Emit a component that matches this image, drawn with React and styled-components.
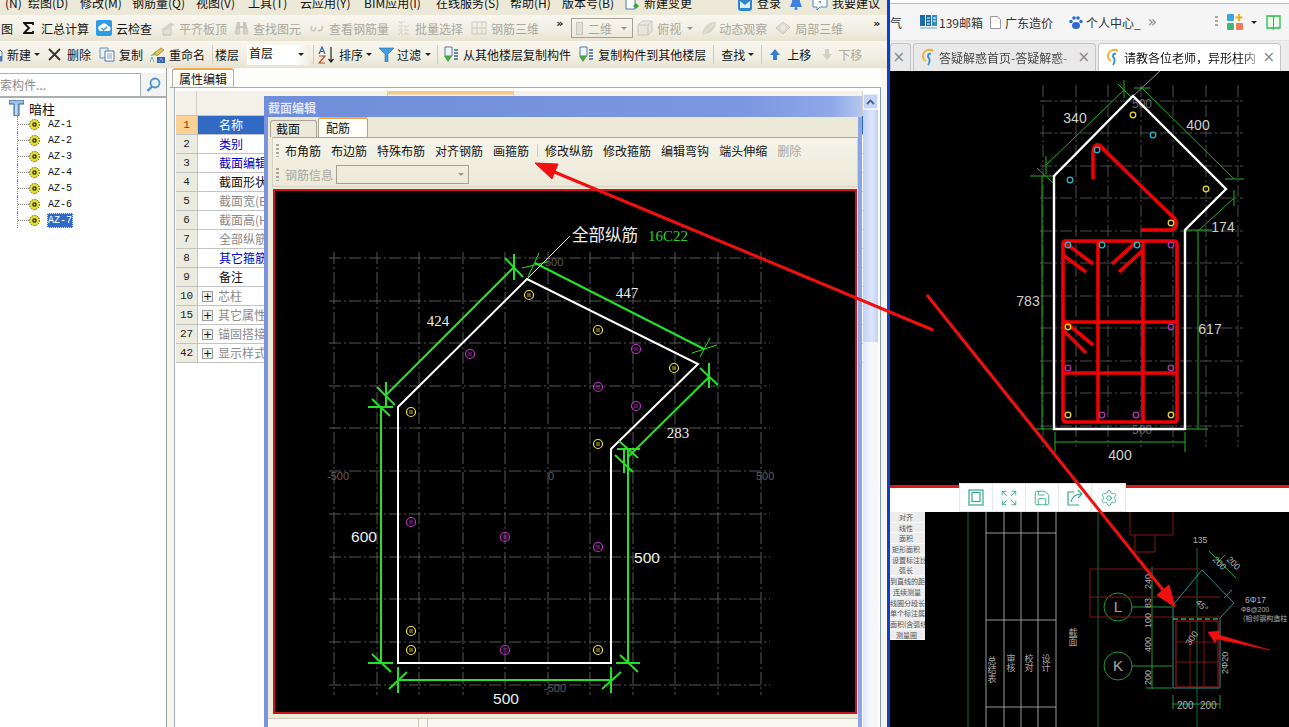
import React from "react";
import styled, { createGlobalStyle } from "styled-components";
import { Expand, Save, Settings } from "lucide-react";

const GlobalStyle = createGlobalStyle`
  html, body {
    margin: 0;
    padding: 0;
    background: #fff;
    overflow: hidden;
  }
  body {
    font-family: "Noto Sans CJK SC", "Liberation Sans", sans-serif;
    font-size: 12px;
    color: #111;
  }
`;

const Page = styled.div`
  position: relative;
  display: flex;
  width: 1289px;
  height: 727px;
  overflow: hidden;
`;

const AppWindow = styled.div`
  width: 887px;
  flex: none;
  display: flex;
  flex-direction: column;
  background: #ece9d8;
`;

const Divider = styled.div`
  width: 3px;
  flex: none;
  background: #0b3fd0;
`;

const MenuBar = styled.div`
  height: 15px;
  flex: none;
  display: flex;
  align-items: flex-start;
  overflow: hidden;
  background: #ece9d8;
  line-height: 12px;
`;

const MenuItem = styled.span`
  flex: none;
  display: inline-flex;
  align-items: center;
  width: ${(p) => (p.$w ? `${p.$w}px` : "auto")};
  margin-top: -3px;
  margin-left: ${(p) => p.$ml || 0}px;
  white-space: nowrap;
`;

const ToolRow = styled.div`
  height: ${(p) => p.$h}px;
  flex: none;
  display: flex;
  align-items: center;
  overflow: hidden;
  white-space: nowrap;
  background: linear-gradient(#f8f6ee, #f2f0e4 55%, #e6e3d3);
`;

const Tool = styled.span`
  flex: none;
  display: inline-flex;
  align-items: center;
  gap: ${(p) => p.$gap || 0}px;
  margin-left: ${(p) => p.$ml || 0}px;
  color: ${(p) => (p.$off ? "#a9a89e" : "#141414")};
  svg {
    flex: none;
    opacity: ${(p) => (p.$off ? 0.55 : 1)};
  }
`;

const Caret = styled.span`
  flex: none;
  width: 0;
  height: 0;
  margin-left: ${(p) => p.$ml || 0}px;
  margin-top: ${(p) => p.$mt || 0}px;
  border-left: 3px solid transparent;
  border-right: 3px solid transparent;
  border-top: 3px solid ${(p) => (p.$off ? "#999" : "#222")};
`;

const Sep = styled.span`
  flex: none;
  width: 1px;
  height: ${(p) => p.$h || 19}px;
  margin-left: ${(p) => p.$ml || 0}px;
  background: #cfccba;
`;

const Chevrons = styled.span`
  flex: none;
  width: 8px;
  margin-left: ${(p) => p.$ml || 0}px;
  margin-top: -9px;
  font: bold 11px/12px "DejaVu Sans", sans-serif;
`;

const DisabledCombo = styled.span`
  flex: none;
  width: 62px;
  height: 20px;
  box-sizing: border-box;
  margin-left: ${(p) => p.$ml}px;
  display: flex;
  align-items: center;
  padding: 0 5px 0 4px;
  gap: 5px;
  border: 1px solid #a5a294;
  color: #a9a89e;
`;

const ComboSwatch = styled.span`
  width: 15px;
  height: 11px;
  background: #e3e1d6;
  border: 1px solid #c8c6ba;
`;

const FloorCombo = styled.span`
  flex: none;
  width: 63px;
  height: 20px;
  margin-left: ${(p) => p.$ml}px;
  display: flex;
  align-items: flex-start;
  justify-content: space-between;
  box-sizing: border-box;
  padding: 0 6px 0 2px;
  background: linear-gradient(90deg, #fff 75%, #f0eee2);
  line-height: 16px;
`;

const Workspace = styled.div`
  flex: 1;
  min-height: 0;
  display: flex;
`;

const Sidebar = styled.div`
  width: 167px;
  flex: none;
  box-sizing: border-box;
  display: flex;
  flex-direction: column;
  background: #fff;
  border-right: 1px solid #98a3a0;
  padding-top: 5px;
  background-clip: padding-box;
`;

const SearchRow = styled.div`
  height: 25px;
  flex: none;
  box-sizing: border-box;
  display: flex;
  border-bottom: 2px solid #a9b1b0;
`;

const SearchInput = styled.div`
  width: 141px;
  box-sizing: border-box;
  border: 1px solid #a8b0b2;
  border-left: none;
  border-bottom: none;
  color: #8b8b8b;
  line-height: 22px;
  background: #fff;
`;

const SearchButton = styled.div`
  flex: 1;
  display: flex;
  align-items: center;
  justify-content: center;
  background: #f3f4f2;
`;

const Tree = styled.div`
  position: relative;
  display: flex;
  flex-direction: column;
  padding-top: 2px;
`;

const TreeRoot = styled.div`
  height: 16px;
  display: flex;
  align-items: center;
  gap: 5px;
  padding-left: 9px;
  font-size: 13px;
`;

const TreeLeaf = styled.div`
  height: 16px;
  display: flex;
  align-items: center;
  margin-left: 17px;
  padding-left: 0;
  border-left: 1px dotted #888;
`;

const TreeDots = styled.span`
  width: 11px;
  border-top: 1px dotted #888;
`;

const LeafLabel = styled.span`
  margin-left: 7px;
  padding: 0 1px;
  font: 10px/15px "Liberation Mono", monospace;
  color: ${(p) => (p.$active ? "#fff" : "#111")};
  background: ${(p) => (p.$active ? "#316ac5" : "transparent")};
  outline: ${(p) => (p.$active ? "1px dotted #dfe6ff" : "none")};
  outline-offset: -1px;
`;

const Main = styled.div`
  position: relative;
  flex: 1;
  min-width: 0;
  display: flex;
  flex-direction: column;
  padding-left: 3px;
  background: #f7f6ee;
  overflow: hidden;
`;

const TabStrip = styled.div`
  height: 20px;
  flex: none;
  display: flex;
  background: #fdfdfb;
  padding-left: 2px;
  margin-right: 6px;
  border-bottom: 1px solid #a4acaf;
  box-sizing: border-box;
`;

const PageTab = styled.div`
  width: 62px;
  box-sizing: border-box;
  padding-left: 6px;
  line-height: 17px;
  background: #fffef8;
  border: 1px solid #b4b0a0;
  border-top: 2px solid #f0a94c;
  border-bottom: none;
  border-radius: 3px 3px 0 0;
`;

const PropertyPanel = styled.div`
  flex: 1;
  min-height: 0;
  display: flex;
  margin: 0 6px 0 4px;
  padding: 3px 2px 0 1px;
  background: #fff;
  border-left: 1px solid #a4b2c0;
  border-right: 1px solid #7f9db0;
`;

const GridBox = styled.div`
  flex: 1;
  min-width: 0;
`;

const GridHead = styled.div`
  height: 25px;
  display: grid;
  grid-template-columns: 21px 191px 126px 1fr;
  background: #f4f2e8;
  border-bottom: 1px solid #c3c3c3;
  box-sizing: border-box;
`;

const HeadCell = styled.div`
  border-right: 1px solid #d0cfc6;
  background: ${(p) => (p.$orange ? "linear-gradient(#f7c987 3px, #f4f2e8 4px)" : "none")};
`;

const GridRow = styled.div`
  height: 19px;
  box-sizing: border-box;
  display: flex;
  border-bottom: 1px solid #c3c3c3;
`;

const RowNumber = styled.div`
  width: 21px;
  flex: none;
  text-align: center;
  font: 11px/18px "Liberation Mono", monospace;
  color: ${(p) => (p.$active ? "#8a3a00" : "#222")};
  background: ${(p) => (p.$active ? "#fcd294" : "#ecebe0")};
  border-right: 1px solid #c3c3c3;
`;

const RowBody = styled.div`
  flex: 1;
  display: flex;
  align-items: center;
  padding-left: ${(p) => (p.$group ? 4 : 21)}px;
  gap: 5px;
  line-height: 18px;
  color: ${(p) => p.$color};
  background: ${(p) => (p.$active ? "#316ac5" : "#fff")};
`;

const PlusBox = styled.span`
  flex: none;
  width: 11px;
  height: 11px;
  box-sizing: border-box;
  border: 1px solid #9a9a9a;
  background: #efefe8;
  color: #111;
  font: 11px/9px "DejaVu Sans", sans-serif;
  text-align: center;
`;

const ScrollTrack = styled.div`
  width: 15px;
  flex: none;
  margin-top: 3px;
  background: linear-gradient(90deg, #dbe4f8, #f5f7fe 40%, #f7f7f2);
`;

const ScrollThumbUp = styled.div`
  height: 15px;
  display: flex;
  align-items: center;
  justify-content: center;
  background: #c6d4f3;
  border: 1px solid #e8effb;
  box-sizing: border-box;
`;

const ScrollFill = styled.div`
  height: 232px;
  margin-top: 1px;
  background: linear-gradient(90deg, #c2d1f4, #dbe5fb 60%, #c2d1f4);
`;

const Dialog = styled.div`
  position: absolute;
  left: 97px;
  top: 28px;
  width: 598px;
  height: 640px;
  display: flex;
  flex-direction: column;
  box-sizing: border-box;
  padding: 0 4px;
  background: linear-gradient(90deg, #7b93dc, #8ea4e6);
`;

const DialogTitle = styled.div`
  height: 21px;
  flex: none;
  margin: 0 -4px;
  padding-left: 4px;
  line-height: 23px;
  color: #dfe6f6;
  font-weight: 700;
  background: linear-gradient(90deg, #6f8dd8, #7c97e2 80%, #8ea8e8 95%, #b6c6ee);
`;

const DialogBody = styled.div`
  flex: 1;
  min-height: 0;
  display: flex;
  flex-direction: column;
  background: #ece9d8;
`;

const DialogTabs = styled.div`
  height: 20px;
  flex: none;
  display: flex;
  align-items: flex-end;
  padding-left: 2px;
`;

const DialogTab = styled.div`
  box-sizing: border-box;
  width: ${(p) => p.$w}px;
  height: ${(p) => (p.$active ? 20 : 17)}px;
  padding-left: ${(p) => (p.$active ? 7 : 5)}px;
  line-height: ${(p) => (p.$active ? 17 : 16)}px;
  margin-left: ${(p) => (p.$active ? 1 : 0)}px;
  background: ${(p) => (p.$active ? "#fffef8" : "#ece9d8")};
  border: 1px solid #a9a698;
  border-bottom: none;
  border-top: ${(p) => (p.$active ? "2px solid #f0a94c" : "1px solid #a9a698")};
  border-radius: 3px 3px 0 0;
`;

const DialogToolbox = styled.div`
  margin-left: 4px;
  flex: none;
  height: 50px;
  box-sizing: border-box;
  display: flex;
  flex-direction: column;
  padding: 2px 0 0 3px;
  border: 1px solid #d5d2c2;
  border-top-color: #a9a698;
  background: linear-gradient(#f6f4ea, #ece9d8);
`;

const DialogRow = styled.div`
  height: 20px;
  flex: none;
  display: flex;
  align-items: center;
  white-space: nowrap;
  &:last-child {
    height: 22px;
    margin-top: 3px;
  }
`;

const Grip = styled.span`
  flex: none;
  width: 3px;
  height: ${(p) => p.$h || 13}px;
  margin-right: ${(p) => (p.$mr === undefined ? 6 : p.$mr)}px;
  background: repeating-linear-gradient(#aaa89a 0 2px, transparent 2px 4px);
`;

const InfoCombo = styled.span`
  flex: none;
  width: 133px;
  height: 19px;
  box-sizing: border-box;
  margin-left: 3px;
  display: flex;
  align-items: center;
  justify-content: flex-end;
  padding-right: 4px;
  border: 1px solid #a5a294;
`;

const CanvasFrame = styled.div`
  flex: none;
  height: 525px;
  margin: 2px 0 0 5px;
  width: 584px;
  box-sizing: border-box;
  background: #000;
  border: 2px solid #c4161c;
`;

const DrawingSvg = styled.svg`
  display: block;
  width: 100%;
  height: 100%;
`;

const DialogFoot = styled.div`
  flex: 1;
  display: flex;
  margin-top: 4px;
  background: #f8f7f0;
  border-top: 1px solid #cfccbc;
`;

const FootCell = styled.div`
  width: ${(p) => p.$w}px;
  border-right: 1px solid #c9c6b8;
`;

const Browser = styled.div`
  flex: 1;
  min-width: 0;
  position: relative;
  display: flex;
  flex-direction: column;
  background: #f5f5f5;
`;

const BrowserTop = styled.div`
  height: 4px;
  flex: none;
  box-sizing: border-box;
  background: #fff;
  border-bottom: 1px solid #bcbcbc;
`;

const Bookmarks = styled.div`
  height: 37px;
  flex: none;
  display: flex;
  align-items: center;
  overflow: hidden;
  white-space: nowrap;
  font-size: 12px;
  color: #333;
  background: #f5f5f5;
  border-bottom: 1px solid #e3e3e3;
  box-sizing: border-box;
`;

const Bookmark = styled.span`
  flex: none;
  display: inline-flex;
  align-items: center;
  gap: ${(p) => p.$gap || 0}px;
  margin-left: ${(p) => p.$ml || 0}px;
`;

const MoreBookmarks = styled.span`
  flex: none;
  margin-left: 7px;
  color: #888;
  font: 15px/15px "DejaVu Sans", sans-serif;
`;

const TabBar = styled.div`
  height: 30px;
  flex: none;
  display: flex;
  align-items: flex-end;
  gap: 2px;
  overflow: hidden;
  background: #ececec;
`;

const BrowserTab = styled.div`
  flex: none;
  width: ${(p) => p.$w}px;
  height: 28px;
  box-sizing: border-box;
  display: flex;
  align-items: center;
  justify-content: ${(p) => (p.$end ? "flex-end" : "flex-start")};
  gap: 4px;
  padding: 0 5px 0 7px;
  white-space: nowrap;
  font-size: 12px;
  color: ${(p) => (p.$active ? "#111" : "#444")};
  background: ${(p) => (p.$active ? "#fff" : "#e9e9e9")};
  border: 1px solid #c4c4c4;
  border-bottom: none;
  border-radius: 4px 4px 0 0;
`;

const TabTitle = styled.span`
  flex: 1;
  overflow: hidden;
  mask-image: linear-gradient(90deg, #000 88%, rgba(0, 0, 0, 0.25));
`;

const TabClose = styled.span`
  flex: none;
  color: #8a8a8a;
  font: 15px/15px "DejaVu Sans", sans-serif;
`;

const UpperImage = styled.div`
  height: 414px;
  flex: none;
  background: #000;
  border-bottom: 3px solid #e01818;
`;

const WhiteGap = styled.div`
  height: 24px;
  flex: none;
  background: #fff;
`;

const LowerImage = styled.div`
  flex: 1;
  min-height: 0;
  position: relative;
  background: #000;
`;

const FloatBar = styled.div`
  position: absolute;
  left: 69px;
  top: 483px;
  display: flex;
  background: #fff;
  border: 1px solid #e6e6e6;
`;

const FloatCell = styled.div`
  width: 33px;
  height: 27px;
  box-sizing: border-box;
  display: flex;
  align-items: center;
  justify-content: center;
  color: #33a98c;
  border-right: 1px solid #e8e8e8;
  &:last-child {
    border-right: none;
  }
`;

const MeasureMenu = styled.div`
  position: absolute;
  left: 0;
  top: 0;
  width: 35px;
  height: 128px;
  display: flex;
  flex-direction: column;
  overflow: hidden;
  background: #ececec;
`;

const MeasureItem = styled.div`
  height: 10.7px;
  flex: none;
  box-sizing: border-box;
  padding-left: ${(p) => p.$pl}px;
  color: #555;
  font-size: 7px;
  line-height: 10px;
  white-space: nowrap;
  border-bottom: 1px solid #f8f8f8;
`;

const ArrowLayer = styled.svg`
  position: absolute;
  left: 0;
  top: 0;
  width: 1289px;
  height: 727px;
  pointer-events: none;
`;

/* ---- toolbar icons ---- */

const Sigma = () => (
  <svg width="11" height="12" viewBox="0 0 11 12">
    <path d="M10 3V1H1l5 5-5 5h9V9" fill="none" stroke="#111" strokeWidth="1.8" />
  </svg>
);

const CloudCheck = () => (
  <svg width="16" height="16" viewBox="0 0 16 16">
    <rect width="16" height="16" rx="2" fill="#2f9be6" />
    <path d="M3 10a3 3 0 0 1 2-5 4 4 0 0 1 7 1 2.400 2.400 0 0 1 0 5H4z" fill="#fff" />
    <path d="M5.500 8l2 2 3.500-3" fill="none" stroke="#2f9be6" strokeWidth="1.400" />
  </svg>
);

const SlabIcon = () => (
  <svg width="16" height="16" viewBox="0 0 16 16">
    <path d="M1 10l9-7 5 1-9 8z" fill="#b9b9b0" />
    <path d="M3 11v4h8V8" fill="#d6d5cc" stroke="#a0a098" />
  </svg>
);

const Binoculars = () => (
  <svg width="15" height="16" viewBox="0 0 15 16">
    <path d="M3 2h3v4h3V2h3l2 10h-5V8H6v4H1z" fill="#a7a59a" />
    <circle cx="3.500" cy="12" r="3" fill="#bdbbb0" />
    <circle cx="11.500" cy="12" r="3" fill="#bdbbb0" />
  </svg>
);

const RebarCheck = () => (
  <svg width="14" height="10" viewBox="0 0 14 10">
    <path d="M2 3c-2 3 0 6 3 4l1-3M8 7c3 2 5-1 4-4" fill="none" stroke="#a9a89e" strokeWidth="1.600" />
  </svg>
);

const GridSelect = () => (
  <svg width="14" height="16" viewBox="0 0 14 16">
    <path d="M1 2h7M1 6h12M1 10h12M1 14h12M4 2v12M9 6v8" stroke="#b4b3a8" fill="none" strokeDasharray="2 1" />
  </svg>
);

const RebarGrid = () => (
  <svg width="16" height="16" viewBox="0 0 16 16">
    <path d="M1 2h14v12H1zM6 2v12M11 2v12M1 8h14" stroke="#aaa99e" fill="none" />
  </svg>
);

const CubeIcon = () => (
  <svg width="16" height="16" viewBox="0 0 16 16">
    <path d="M1 5l4-4h10v10l-4 4H1z" fill="#e2e0d4" stroke="#a9a89e" />
    <path d="M1 5h10v10M11 5l4-4" fill="none" stroke="#a9a89e" />
  </svg>
);

const OrbitIcon = () => (
  <svg width="16" height="16" viewBox="0 0 16 16">
    <path d="M1 14C2 7 8 1 15 2c0 7-6 13-14 12z" fill="#bfc5ae" />
    <path d="M3 13L13 4" stroke="#e8e8de" />
  </svg>
);

const LocalCube = () => (
  <svg width="16" height="16" viewBox="0 0 16 16">
    <path d="M8 2l7 5-7 7-7-6z" fill="#cfcec4" stroke="#aaa99e" />
    <circle cx="8" cy="8" r="2.400" fill="#e9e8e0" />
  </svg>
);

const NewDoc = () => (
  <svg width="16" height="16" viewBox="0 0 16 16">
    <path d="M2 2h9l3 3v9H2z" fill="#fff" stroke="#5b7fa8" />
    <path d="M2 9h12v5H2z" fill="#4c78b5" />
  </svg>
);

const Cross = () => (
  <svg width="13" height="13" viewBox="0 0 13 13">
    <path d="M1 1l11 11M12 1L1 12" stroke="#333" strokeWidth="1.800" />
  </svg>
);

const CopyIcon = () => (
  <svg width="16" height="15" viewBox="0 0 16 15">
    <path d="M1 1h8v10H1z" fill="#e9f0f8" stroke="#6f8eb4" />
    <path d="M6 4h9v10H6z" fill="#fff" stroke="#4a78b0" />
    <path d="M8 7h5M8 9h5M8 11h5" stroke="#7fa0c8" />
  </svg>
);

const RenameIcon = () => (
  <svg width="16" height="16" viewBox="0 0 16 16">
    <path d="M5 6l7-5 3 2-7 6z" fill="#e8c050" stroke="#8a7028" strokeWidth=".6" />
    <path d="M1 9l5-4 2 3z" fill="#8fb070" />
    <rect x="8" y="10" width="8" height="6" fill="#2f62b8" />
    <path d="M1 15l2-5 2 5M10 15l2-4 2 4" stroke="#8ab" fill="none" />
  </svg>
);

const SortIcon = () => (
  <svg width="17" height="18" viewBox="0 0 17 18">
    <path d="M1 8l3-7 3 7M2.200 5.500h3.600" fill="none" stroke="#2a62b0" strokeWidth="1.200" />
    <path d="M1 10h6l-6 7h6" fill="none" stroke="#c04a2a" strokeWidth="1.200" />
    <path d="M13 1v15M10.500 13l2.500 3 2.500-3" fill="none" stroke="#222" strokeWidth="1.200" />
  </svg>
);

const FunnelIcon = () => (
  <svg width="15" height="15" viewBox="0 0 15 15">
    <path d="M0 1h15L9 7v8H6V7z" fill="#3f9fde" stroke="#2a6fb0" strokeWidth=".6" />
  </svg>
);

const FloorCopyIcon = () => (
  <svg width="16" height="17" viewBox="0 0 16 17">
    <path d="M2 1h7v9H2z" fill="#eef3f8" stroke="#5b7a9e" />
    <path d="M1 10h8l-4 6z" fill="#45a845" />
    <path d="M11 4h4M11 7h4M11 10h4M11 13h4" stroke="#3d6a9c" strokeWidth="1.400" />
  </svg>
);

const MoveArrow = ({ color, down }) => (
  <svg width="10" height="11" viewBox="0 0 10 11">
    <path d={down ? "M3 0h4v5h3l-5 6-5-6h3z" : "M5 0l5 6H7v5H3V6H0z"} fill={color} />
  </svg>
);

const ChangeDoc = () => (
  <svg width="15" height="15" viewBox="0 0 15 15">
    <path d="M1 0h9v12H1z" fill="#fff" stroke="#4a78b0" />
    <path d="M8 9l3-3 3 3-3 3z" fill="#3ca53c" />
  </svg>
);

const LoginIcon = () => (
  <svg width="14" height="15" viewBox="0 0 14 15">
    <rect y="0" width="14" height="14" rx="3" fill="#2f86cf" />
    <path d="M2 4l5 4 5-4v7H2z" fill="#dcefff" />
  </svg>
);

const BellIcon = () => (
  <svg width="12" height="13" viewBox="0 0 12 13">
    <path d="M6 0c3 0 4 2 4 5l2 5H0l2-5c0-3 1-5 4-5z" fill="#3c82d8" />
    <circle cx="6" cy="11.500" r="1.500" fill="#3c82d8" />
  </svg>
);

const BubbleIcon = () => (
  <svg width="16" height="15" viewBox="0 0 16 15">
    <path d="M1 1h14v9H8l-3 3v-3H1z" fill="#fff" stroke="#4a86c6" />
    <circle cx="8" cy="5" r="1" fill="#4a86c6" />
  </svg>
);

const SearchGlass = () => (
  <svg width="15" height="15" viewBox="0 0 15 15">
    <circle cx="9" cy="6" r="4.500" fill="#e8f2fb" stroke="#4f93cf" strokeWidth="1.800" />
    <path d="M6 9.500L1.500 14" stroke="#4f93cf" strokeWidth="2.400" />
  </svg>
);

const ColumnIcon = () => (
  <svg width="15" height="16" viewBox="0 0 15 16">
    <path d="M0 0h15v4H10v12H5V4H0z" fill="#9cc3e6" stroke="#2f5f95" />
    <path d="M7 5v10" stroke="#e8f3ff" />
  </svg>
);

const GearDot = () => (
  <svg width="11" height="11" viewBox="0 0 11 11">
    <circle cx="5.500" cy="5.500" r="5" fill="#e6df30" stroke="#5a5a10" strokeDasharray="1.500 1" />
    <circle cx="5.500" cy="5.500" r="2.200" fill="#222" />
    <circle cx="5.500" cy="5.500" r="1" fill="#e6df30" />
  </svg>
);

const ChevronUp = () => (
  <svg width="9" height="6" viewBox="0 0 9 6">
    <path d="M1 5l3.500-3.500L8 5" fill="none" stroke="#4d6185" strokeWidth="1.800" />
  </svg>
);

const Logo139 = () => (
  <svg width="17" height="14" viewBox="0 0 17 14">
    <rect width="5" height="11" fill="#1f6aa8" />
    <rect x="6" width="5" height="11" fill="#1f6aa8" />
    <rect x="12" width="5" height="11" fill="#3c8bc8" />
    <path d="M0 13h17" stroke="#6fa8d8" />
    <path d="M7 3h3M7 6h3M7 9h3M13 3h3M13 6h3" stroke="#fff" />
  </svg>
);

const DocIcon = () => (
  <svg width="11" height="13" viewBox="0 0 11 13">
    <path d="M.5.500h7l3 3v9h-10z" fill="#fff" stroke="#9a9a9a" />
  </svg>
);

const PawIcon = () => (
  <svg width="14" height="15" viewBox="0 0 14 15">
    <ellipse cx="7" cy="10.500" rx="4" ry="3.500" fill="#2b6bd0" />
    <circle cx="2" cy="6.500" r="1.700" fill="#2b6bd0" />
    <circle cx="12" cy="6.500" r="1.700" fill="#2b6bd0" />
    <circle cx="5" cy="3" r="1.800" fill="#2b6bd0" />
    <circle cx="9" cy="3" r="1.800" fill="#2b6bd0" />
  </svg>
);

const AppsIcon = () => (
  <svg width="16" height="16" viewBox="0 0 16 16">
    <rect x="0" y="0" width="7" height="7" rx="1" fill="#3aa7e0" />
    <path d="M12 0v7M8.500 3.500h7" stroke="#f0b020" strokeWidth="2.200" />
    <rect x="0" y="9" width="7" height="7" rx="1" fill="#3cb878" />
    <rect x="9" y="9" width="7" height="7" rx="1" fill="#ef7a5a" />
  </svg>
);

const BookIcon = () => (
  <svg width="15" height="15" viewBox="0 0 15 15">
    <path d="M1 1h6l.500 1L8 1h6v12H8l-.500 1L7 13H1z" fill="#e8fbe8" stroke="#2dbb4c" strokeWidth="1.300" />
    <path d="M7.500 2v11" stroke="#2dbb4c" />
  </svg>
);

const HelpMark = () => (
  <svg width="14" height="19" viewBox="0 0 14 19">
    <path d="M12 3C8 0 2 3 2 8c0 2 1 4 3 5" fill="none" stroke="#f0b030" strokeWidth="1.800" />
    <path d="M10 6C7 5 6 8 8 10c1 2 1 4-1 7" fill="none" stroke="#2f8fd8" strokeWidth="1.800" />
  </svg>
);

const TabletGlyph = () => (
  <svg width="16" height="17" viewBox="0 0 16 17" fill="none" stroke="currentColor" strokeWidth="1.200">
    <rect x="1" y="1" width="14" height="15" />
    <rect x="4" y="3.500" width="8" height="9" />
  </svg>
);

const ShareGlyph = () => (
  <svg width="17" height="17" viewBox="0 0 17 17" fill="none" stroke="currentColor" strokeWidth="1.200">
    <path d="M12 16H1V3h6" />
    <path d="M4 13c1-5 5-8 11-8M11 1l4 4-4 4" />
  </svg>
);

/* ---- main cad drawing, page coordinates ---- */

const hLines = [258, 301, 343, 386, 428, 471, 514, 557, 599, 642, 685];
const vLines = [334, 377, 419, 463, 505, 548, 590, 633, 675, 718, 761];

const mainDims = [
  [386, 395, 514, 267],
  [386, 382, 386, 408],
  [377, 387, 395, 405],
  [514, 254, 514, 280],
  [505, 258, 523, 277],
  [368, 407, 393, 407],
  [372, 399, 390, 416],
  [381, 407, 381, 663],
  [368, 663, 393, 663],
  [372, 654, 391, 672],
  [398, 680, 611, 680],
  [398, 667, 398, 693],
  [389, 689, 407, 672],
  [611, 667, 611, 693],
  [602, 689, 621, 672],
  [628, 449, 628, 663],
  [616, 663, 640, 663],
  [620, 655, 638, 672],
  [709, 377, 628, 457],
  [709, 363, 709, 388],
  [700, 368, 718, 385],
  [617, 449, 640, 449],
  [619, 441, 638, 458],
  [624, 450, 624, 473],
  [615, 455, 633, 472],
  [535, 263, 704, 349],
];

const mainThin = [
  [522, 268, 547, 262],
  [528, 277, 539, 253],
  [692, 353, 717, 345],
  [700, 357, 710, 338],
];

const yellowBars = [
  [529, 295],
  [598, 330],
  [674, 368],
  [598, 444],
  [411, 412],
  [411, 631],
  [411, 650],
  [598, 650],
];

const purpleBars = [
  [470, 354],
  [636, 349],
  [598, 387],
  [636, 406],
  [411, 522],
  [505, 537],
  [598, 547],
  [505, 650],
];

const RebarDot = ({ x, y, color }) => (
  <g stroke={color} fill="none" strokeWidth="1.200">
    <circle cx={x} cy={y} r="4.500" />
    <path d={`M${x - 2} ${y - 1}h4M${x - 2} ${y + 1}h4`} strokeWidth=".8" />
  </g>
);

const MainDrawing = () => (
  <DrawingSvg viewBox="275 191 580 521">
    <g stroke="#565656" strokeDasharray="12 3 2 3">
      {hLines.map((y) => (
        <line key={y} x1="329" x2="770" y1={y} y2={y} />
      ))}
      {vLines.map((x) => (
        <line key={x} x1={x} x2={x} y1="252" y2="695" />
      ))}
    </g>
    <g fill="#5c5c5c" fontSize="11" fontFamily="Liberation Sans">
      <text x="545" y="266">500</text>
      <text x="327" y="480">-500</text>
      <text x="548" y="480">0</text>
      <text x="756" y="480">500</text>
      <text x="544" y="692">-500</text>
    </g>
    <polygon
      points="398,407 527,279 698,364 611,449 611,663 398,663"
      fill="none"
      stroke="#fff"
      strokeWidth="2"
    />
    <g stroke="#27e027" strokeWidth="2">
      {mainDims.map((d) => (
        <line key={d.join()} x1={d[0]} y1={d[1]} x2={d[2]} y2={d[3]} />
      ))}
    </g>
    <g stroke="#27e027" strokeWidth="1">
      {mainThin.map((d) => (
        <line key={d.join()} x1={d[0]} y1={d[1]} x2={d[2]} y2={d[3]} />
      ))}
    </g>
    <line x1="527" y1="279" x2="570" y2="236" stroke="#ddd" />
    {yellowBars.map(([x, y]) => (
      <RebarDot key={`${x}-${y}`} x={x} y={y} color="#f2e23a" />
    ))}
    {purpleBars.map(([x, y]) => (
      <RebarDot key={`${x}-${y}`} x={x} y={y} color="#c82ed0" />
    ))}
    <g fill="#eee" fontSize="15" fontFamily="Liberation Serif" textAnchor="middle">
      <text x="438" y="326">424</text>
      <text x="627" y="298">447</text>
      <text x="678" y="438">283</text>
    </g>
    <g fill="#eee" fontSize="15.500" fontFamily="Liberation Sans" textAnchor="middle">
      <text x="364" y="542">600</text>
      <text x="647" y="563">500</text>
      <text x="506" y="704">500</text>
    </g>
    <text x="572" y="241" fill="#eee" fontSize="16.500" fontFamily="Noto Sans CJK SC">全部纵筋</text>
    <text x="648" y="241" fill="#27d027" fontSize="15" fontFamily="Liberation Serif">16C22</text>
  </DrawingSvg>
);

/* ---- drawing in the right hand picture ---- */

const rightH = [101, 133, 166, 198, 231, 263, 296, 328, 361, 393, 426];
const rightV = [1043, 1076, 1108, 1141, 1173, 1206, 1238];

const rightGreen = [
  [1046, 165, 1124, 90],
  [1046, 156, 1046, 174],
  [1037, 168, 1054, 184],
  [1030, 176, 1056, 176],
  [1124, 80, 1124, 98],
  [1118, 84, 1132, 98],
  [1142, 88, 1234, 179],
  [1134, 88, 1150, 88],
  [1225, 179, 1244, 179],
  [1234, 198, 1197, 232],
  [1234, 190, 1234, 206],
  [1042, 176, 1042, 429],
  [1034, 429, 1054, 429],
  [1198, 232, 1198, 429],
  [1186, 230, 1212, 230],
  [1186, 429, 1208, 429],
  [1055, 442, 1185, 442],
  [1055, 432, 1055, 452],
  [1185, 432, 1185, 452],
];

const rightRed = [
  "M1066 241H1174Q1177 241 1177 244V419Q1177 422 1174 422H1066Q1063 422 1063 419V244Q1063 241 1066 241Z",
  "M1098 241V422",
  "M1143 241V422",
  "M1063 322H1177",
  "M1063 373H1177",
  "M1063 241L1093 264",
  "M1063 255L1086 272",
  "M1137 241L1112 264",
  "M1143 250L1119 272",
  "M1063 320L1093 345",
  "M1063 330L1086 353",
  "M1093 179V151Q1094 144 1099 145L1175 219Q1179 226 1172 230H1141",
];

const rightDots = [
  [1133, 115, "#e8d820"],
  [1206, 189, "#e8d820"],
  [1171, 223, "#e8d820"],
  [1068, 327, "#e8d820"],
  [1068, 415, "#e8d820"],
  [1171, 415, "#e8d820"],
  [1153, 135, "#22b8d0"],
  [1070, 180, "#22b8d0"],
  [1097, 150, "#22b8d0"],
  [1068, 245, "#22b8d0"],
  [1102, 245, "#22b8d0"],
  [1137, 245, "#22b8d0"],
  [1171, 245, "#b030b8"],
  [1171, 327, "#b030b8"],
  [1068, 368, "#b030b8"],
  [1171, 368, "#b030b8"],
  [1102, 415, "#b030b8"],
  [1136, 415, "#b030b8"],
];

const UpperDrawing = () => (
  <DrawingSvg viewBox="890 71 399 414">
    <g stroke="#4c4c4c" strokeDasharray="12 3 2 3">
      {rightH.map((y) => (
        <line key={y} x1="1040" x2="1243" y1={y} y2={y} />
      ))}
      {rightV.map((x) => (
        <line key={x} x1={x} x2={x} y1="85" y2="447" />
      ))}
    </g>
    <g fill="#666" fontSize="12" fontFamily="Liberation Sans" textAnchor="middle">
      <text x="1142" y="108">500</text>
      <text x="1142" y="434">500</text>
    </g>
    <g stroke="#22b022" strokeWidth="1">
      {rightGreen.map((d) => (
        <line key={d.join()} x1={d[0]} y1={d[1]} x2={d[2]} y2={d[3]} />
      ))}
    </g>
    <line x1="1133" y1="96" x2="1160" y2="71" stroke="#999" />
    <polygon
      points="1054,176 1133,96 1226,189 1185,230 1185,429 1054,429"
      fill="none"
      stroke="#fff"
      strokeWidth="2.400"
    />
    <g fill="none" stroke="#f00000" strokeWidth="3.600">
      {rightRed.map((d) => (
        <path key={d} d={d} />
      ))}
    </g>
    {rightDots.map(([x, y, c]) => (
      <circle key={`${x}-${y}`} cx={x} cy={y} r="2.800" fill="none" stroke={c} strokeWidth="1.300" />
    ))}
    <g fill="#d0d0d0" fontSize="14" fontFamily="Liberation Sans" textAnchor="middle">
      <text x="1075" y="123">340</text>
      <text x="1198" y="130">400</text>
      <text x="1028" y="306">783</text>
      <text x="1210" y="334">617</text>
      <text x="1223" y="232">174</text>
      <text x="1120" y="460">400</text>
    </g>
  </DrawingSvg>
);

const measureItems = [
  ["对齐", 9],
  ["线性", 9],
  ["面积", 9],
  ["矩形面积", 2],
  ["设置标注比例", 2],
  ["弧长", 9],
  ["到直线的距离", 0],
  ["连续测量", 3],
  ["线圈分段长度", 0],
  ["单个标注属性", 0],
  ["面积(含弧线)", 0],
  ["测量圈", 6],
];

const LowerDrawing = () => (
  <DrawingSvg viewBox="890 512 399 215">
    <g stroke="#0f6a3c">
      <line x1="968" x2="968" y1="512" y2="727" />
      <line x1="1098" x2="1098" y1="512" y2="727" />
      <line x1="1197" x2="1197" y1="548" y2="727" />
    </g>
    <g stroke="#bbb" strokeWidth=".8">
      {[986, 1004, 1021, 1038, 1056].map((x) => (
        <line key={x} x1={x} x2={x} y1="512" y2="727" />
      ))}
      {[533, 620, 707].map((y) => (
        <line key={y} x1="986" x2="1056" y1={y} y2={y} />
      ))}
    </g>
    <g fill="#a8a8a8" fontSize="9" fontFamily="Noto Sans CJK SC" writingMode="vertical-rl">
      <text x="992" y="656">总结表</text>
      <text x="1011" y="654">审核</text>
      <text x="1029" y="654">校对</text>
      <text x="1046" y="654">设计</text>
      <text x="1073" y="628">截面</text>
    </g>
    <g fill="none" stroke="#1f9a3c">
      <circle cx="1118" cy="607" r="14" />
      <circle cx="1118" cy="666" r="14" />
      <path d="M1132 607h40M1132 666h40M1152 567v122M1146 688h26M1173 704h47M1173 695v14M1220 695v14" />
      <path d="M1209 551l27 27M1225 555l-8 8M1232 590l-8 8" />
    </g>
    <g fill="#a8a8a8" fontFamily="Liberation Sans" fontSize="15" textAnchor="middle">
      <text x="1118" y="612">L</text>
      <text x="1118" y="671">K</text>
    </g>
    <g fill="none" stroke="#7a1a10">
      <path d="M1130 512v23h43v-23M1135 535v17h20v-17" />
      <path d="M1090 569h110M1090 597h130M1090 617h130M1090 569v48" />
    </g>
    <polygon points="1173,605 1202,570 1234,603 1220,618 1220,688 1173,688" fill="none" stroke="#2e8f8f" />
    <path d="M1173 619h47" stroke="#2fa" strokeDasharray="5 3" />
    <g fill="none" stroke="#b01818">
      <rect x="1176" y="621" width="42" height="66" />
      <path d="M1190 621v66M1204 621v66M1176 642h42M1176 662h42" strokeWidth=".7" />
    </g>
    <g fill="#b0b0b0" fontSize="8.500" fontFamily="Liberation Sans">
      <text x="1193" y="543">135</text>
      <text x="1245" y="603">6Φ17</text>
      <text x="1241" y="612" fontSize="7">Φ8@200</text>
      <text x="1243" y="621" fontSize="7" fontFamily="Noto Sans CJK SC">(相邻钢构造柱</text>
      <text x="1177" y="709" fontSize="10">200</text>
      <text x="1200" y="709" fontSize="10">200</text>
    </g>
    <g fill="#b0b0b0" fontSize="9" fontFamily="Liberation Sans">
      <text transform="translate(1151 589) rotate(-90)">240</text>
      <text transform="translate(1151 608) rotate(-90)">83</text>
      <text transform="translate(1151 628) rotate(-90)">100</text>
      <text transform="translate(1151 652) rotate(-90)">400</text>
      <text transform="translate(1151 685) rotate(-90)">200</text>
      <text transform="translate(1212 560) rotate(45)">200</text>
      <text transform="translate(1226 560) rotate(45)">200</text>
      <text transform="translate(1195 603) rotate(45)">45°</text>
      <text transform="translate(1190 646) rotate(-55)">300</text>
      <text transform="translate(1228 674) rotate(-90)">2Φ20</text>
    </g>
  </DrawingSvg>
);

const rows = [
  { no: "1", label: "名称", color: "#fff", active: true },
  { no: "2", label: "类别", color: "#0000c8" },
  { no: "3", label: "截面编辑", color: "#0000c8" },
  { no: "4", label: "截面形状", color: "#111" },
  { no: "5", label: "截面宽(B边)(mm)", color: "#8a8a8a" },
  { no: "6", label: "截面高(H边)(mm)", color: "#8a8a8a" },
  { no: "7", label: "全部纵筋", color: "#8a8a8a" },
  { no: "8", label: "其它箍筋", color: "#0000c8" },
  { no: "9", label: "备注", color: "#111" },
  { no: "10", label: "芯柱", color: "#8a8a8a", group: true },
  { no: "15", label: "其它属性", color: "#8a8a8a", group: true },
  { no: "27", label: "锚固搭接", color: "#8a8a8a", group: true },
  { no: "42", label: "显示样式", color: "#8a8a8a", group: true },
];

const App = () => {
  return (
    <Page>
      <GlobalStyle />
      <AppWindow>
        <MenuBar>
          <MenuItem $ml={5} $w={23}>(N)</MenuItem>
          <MenuItem $w={52}>绘图(D)</MenuItem>
          <MenuItem $w={52}>修改(M)</MenuItem>
          <MenuItem $w={64}>钢筋量(Q)</MenuItem>
          <MenuItem $w={52}>视图(V)</MenuItem>
          <MenuItem $w={52}>工具(T)</MenuItem>
          <MenuItem $w={64}>云应用(Y)</MenuItem>
          <MenuItem $w={72}>BIM应用(I)</MenuItem>
          <MenuItem $w={74}>在线服务(S)</MenuItem>
          <MenuItem $w={52}>帮助(H)</MenuItem>
          <MenuItem $w={63}>版本号(B)</MenuItem>
          <MenuItem $w={19}><ChangeDoc /></MenuItem>
          <MenuItem $w={54}>新建变更</MenuItem>
          <MenuItem $w={40}><Caret /></MenuItem>
          <MenuItem $w={19}><LoginIcon /></MenuItem>
          <MenuItem $w={33}>登录</MenuItem>
          <MenuItem $w={22}><BellIcon /></MenuItem>
          <MenuItem $w={20}><BubbleIcon /></MenuItem>
          <MenuItem>我要建议</MenuItem>
        </MenuBar>
        <ToolRow $h={26}>
          <Tool $ml={1}>图</Tool>
          <Tool $ml={10} $gap={7}><Sigma />汇总计算</Tool>
          <Tool $ml={7} $gap={4}><CloudCheck />云检查</Tool>
          <Tool $ml={8} $gap={3} $off><SlabIcon />平齐板顶</Tool>
          <Tool $ml={7} $gap={4} $off><Binoculars />查找图元</Tool>
          <Tool $ml={9} $gap={5} $off><RebarCheck />查看钢筋量</Tool>
          <Tool $ml={8} $gap={4} $off><GridSelect />批量选择</Tool>
          <Tool $ml={8} $gap={4} $off><RebarGrid />钢筋三维</Tool>
          <Chevrons $ml={17}>»</Chevrons>
          <DisabledCombo $ml={7}><ComboSwatch />二维<Caret $ml={4} $off /></DisabledCombo>
          <Tool $ml={4} $gap={4} $off><CubeIcon />俯视</Tool>
          <Caret $ml={6} $off />
          <Tool $ml={8} $gap={2} $off><OrbitIcon />动态观察</Tool>
          <Tool $ml={8} $gap={4} $off><LocalCube />局部三维</Tool>
          <Chevrons $ml={30}>»</Chevrons>
        </ToolRow>
        <ToolRow $h={27}>
          <Tool $ml={-12} $gap={3}><NewDoc />新建</Tool>
          <Caret $ml={3} />
          <Tool $ml={8} $gap={6}><Cross />删除</Tool>
          <Tool $ml={8} $gap={4}><CopyIcon />复制</Tool>
          <Tool $ml={6} $gap={4}><RenameIcon />重命名</Tool>
          <Sep $ml={7} />
          <Tool $ml={2}>楼层</Tool>
          <FloorCombo $ml={8}>首层<Caret $mt={8} /></FloorCombo>
          <Sep $ml={3} />
          <Tool $ml={4} $gap={4}><SortIcon />排序</Tool>
          <Caret $ml={3} />
          <Tool $ml={7} $gap={3}><FunnelIcon />过滤</Tool>
          <Caret $ml={4} />
          <Sep $ml={6} />
          <Tool $ml={5} $gap={4}><FloorCopyIcon />从其他楼层复制构件</Tool>
          <Tool $ml={7} $gap={4}><FloorCopyIcon />复制构件到其他楼层</Tool>
          <Sep $ml={7} />
          <Tool $ml={7}>查找</Tool>
          <Caret $ml={3} />
          <Sep $ml={7} />
          <Tool $ml={8} $gap={7}><MoveArrow color="#2f7fd8" />上移</Tool>
          <Tool $ml={11} $gap={6} $off><MoveArrow color="#b8b8ae" down />下移</Tool>
        </ToolRow>
        <Workspace>
          <Sidebar>
            <SearchRow>
              <SearchInput>索构件...</SearchInput>
              <SearchButton><SearchGlass /></SearchButton>
            </SearchRow>
            <Tree>
              <TreeRoot><ColumnIcon />暗柱</TreeRoot>
              {["AZ-1", "AZ-2", "AZ-3", "AZ-4", "AZ-5", "AZ-6", "AZ-7"].map((name) => (
                <TreeLeaf key={name}>
                  <TreeDots />
                  <GearDot />
                  <LeafLabel $active={name === "AZ-7"}>{name}</LeafLabel>
                </TreeLeaf>
              ))}
            </Tree>
          </Sidebar>
          <Main>
            <TabStrip>
              <PageTab>属性编辑</PageTab>
            </TabStrip>
            <PropertyPanel>
              <GridBox>
                <GridHead>
                  <HeadCell />
                  <HeadCell />
                  <HeadCell $orange />
                  <HeadCell />
                </GridHead>
                {rows.map((row) => (
                  <GridRow key={row.no}>
                    <RowNumber $active={row.active}>{row.no}</RowNumber>
                    <RowBody $color={row.color} $active={row.active} $group={row.group}>
                      {row.group && <PlusBox>+</PlusBox>}
                      {row.label}
                    </RowBody>
                  </GridRow>
                ))}
              </GridBox>
              <ScrollTrack>
                <ScrollThumbUp><ChevronUp /></ScrollThumbUp>
                <ScrollFill />
              </ScrollTrack>
            </PropertyPanel>
            <Dialog>
              <DialogTitle>截面编辑</DialogTitle>
              <DialogBody>
                <DialogTabs>
                  <DialogTab $w={47}>截面</DialogTab>
                  <DialogTab $w={50} $active>配筋</DialogTab>
                </DialogTabs>
                <DialogToolbox>
                  <DialogRow>
                    <Grip />
                    <Tool>布角筋</Tool>
                    <Tool $ml={10}>布边筋</Tool>
                    <Tool $ml={10}>特殊布筋</Tool>
                    <Tool $ml={10}>对齐钢筋</Tool>
                    <Tool $ml={10}>画箍筋</Tool>
                    <Sep $ml={8} $h={13} />
                    <Tool $ml={7}>修改纵筋</Tool>
                    <Tool $ml={10}>修改箍筋</Tool>
                    <Tool $ml={10}>编辑弯钩</Tool>
                    <Tool $ml={10}>端头伸缩</Tool>
                    <Tool $ml={10} $off>删除</Tool>
                  </DialogRow>
                  <DialogRow>
                    <Grip />
                    <Tool $off>钢筋信息</Tool>
                    <InfoCombo><Caret $off /></InfoCombo>
                  </DialogRow>
                </DialogToolbox>
                <CanvasFrame>
                  <MainDrawing />
                </CanvasFrame>
                <DialogFoot>
                  <FootCell $w={150} />
                  <FootCell $w={8} />
                </DialogFoot>
              </DialogBody>
            </Dialog>
          </Main>
        </Workspace>
      </AppWindow>
      <Divider />
      <Browser>
        <BrowserTop />
        <Bookmarks>
          <Bookmark>气</Bookmark>
          <Bookmark $ml={18} $gap={2}><Logo139 />139邮箱</Bookmark>
          <Bookmark $ml={7} $gap={4}><DocIcon />广东造价</Bookmark>
          <Bookmark $ml={16} $gap={3}><PawIcon />个人中心_</Bookmark>
          <MoreBookmarks>»</MoreBookmarks>
          <Bookmark $ml={58}><Grip $mr={0} $h={12} /></Bookmark>
          <Bookmark $ml={9}><AppsIcon /></Bookmark>
          <Bookmark $ml={8}><Caret /></Bookmark>
          <Bookmark $ml={9}><BookIcon /></Bookmark>
        </Bookmarks>
        <TabBar>
          <BrowserTab $w={21} $end>
            <TabClose>×</TabClose>
          </BrowserTab>
          <BrowserTab $w={183}>
            <HelpMark />
            <TabTitle>答疑解惑首页-答疑解惑-</TabTitle>
            <TabClose>×</TabClose>
          </BrowserTab>
          <BrowserTab $w={183} $active>
            <HelpMark />
            <TabTitle>请教各位老师，异形柱内</TabTitle>
            <TabClose>×</TabClose>
          </BrowserTab>
        </TabBar>
        <UpperImage>
          <UpperDrawing />
        </UpperImage>
        <WhiteGap />
        <LowerImage>
          <LowerDrawing />
          <MeasureMenu>
            {measureItems.map(([label, pl]) => (
              <MeasureItem key={label} $pl={pl}>{label}</MeasureItem>
            ))}
          </MeasureMenu>
        </LowerImage>
        <FloatBar>
          <FloatCell><TabletGlyph /></FloatCell>
          <FloatCell><Expand size={18} strokeWidth={1.2} /></FloatCell>
          <FloatCell><Save size={18} strokeWidth={1.2} /></FloatCell>
          <FloatCell><ShareGlyph /></FloatCell>
          <FloatCell><Settings size={18} strokeWidth={1.2} /></FloatCell>
        </FloatBar>
      </Browser>
      <ArrowLayer viewBox="0 0 1289 727">
        <g fill="#f01010" stroke="#f01010">
          <line x1="933" y1="330" x2="552" y2="171" strokeWidth="3" />
          <polygon points="535,163 558,164 552,179" />
          <line x1="927" y1="295" x2="1163" y2="590" strokeWidth="3" />
          <polygon points="1175,607 1169,585 1157,595" />
          <polygon points="1208,632 1220,631 1219,635 1270,650 1217,639 1215,643" strokeWidth=".5" />
        </g>
      </ArrowLayer>
    </Page>
  );
};

export default App;
